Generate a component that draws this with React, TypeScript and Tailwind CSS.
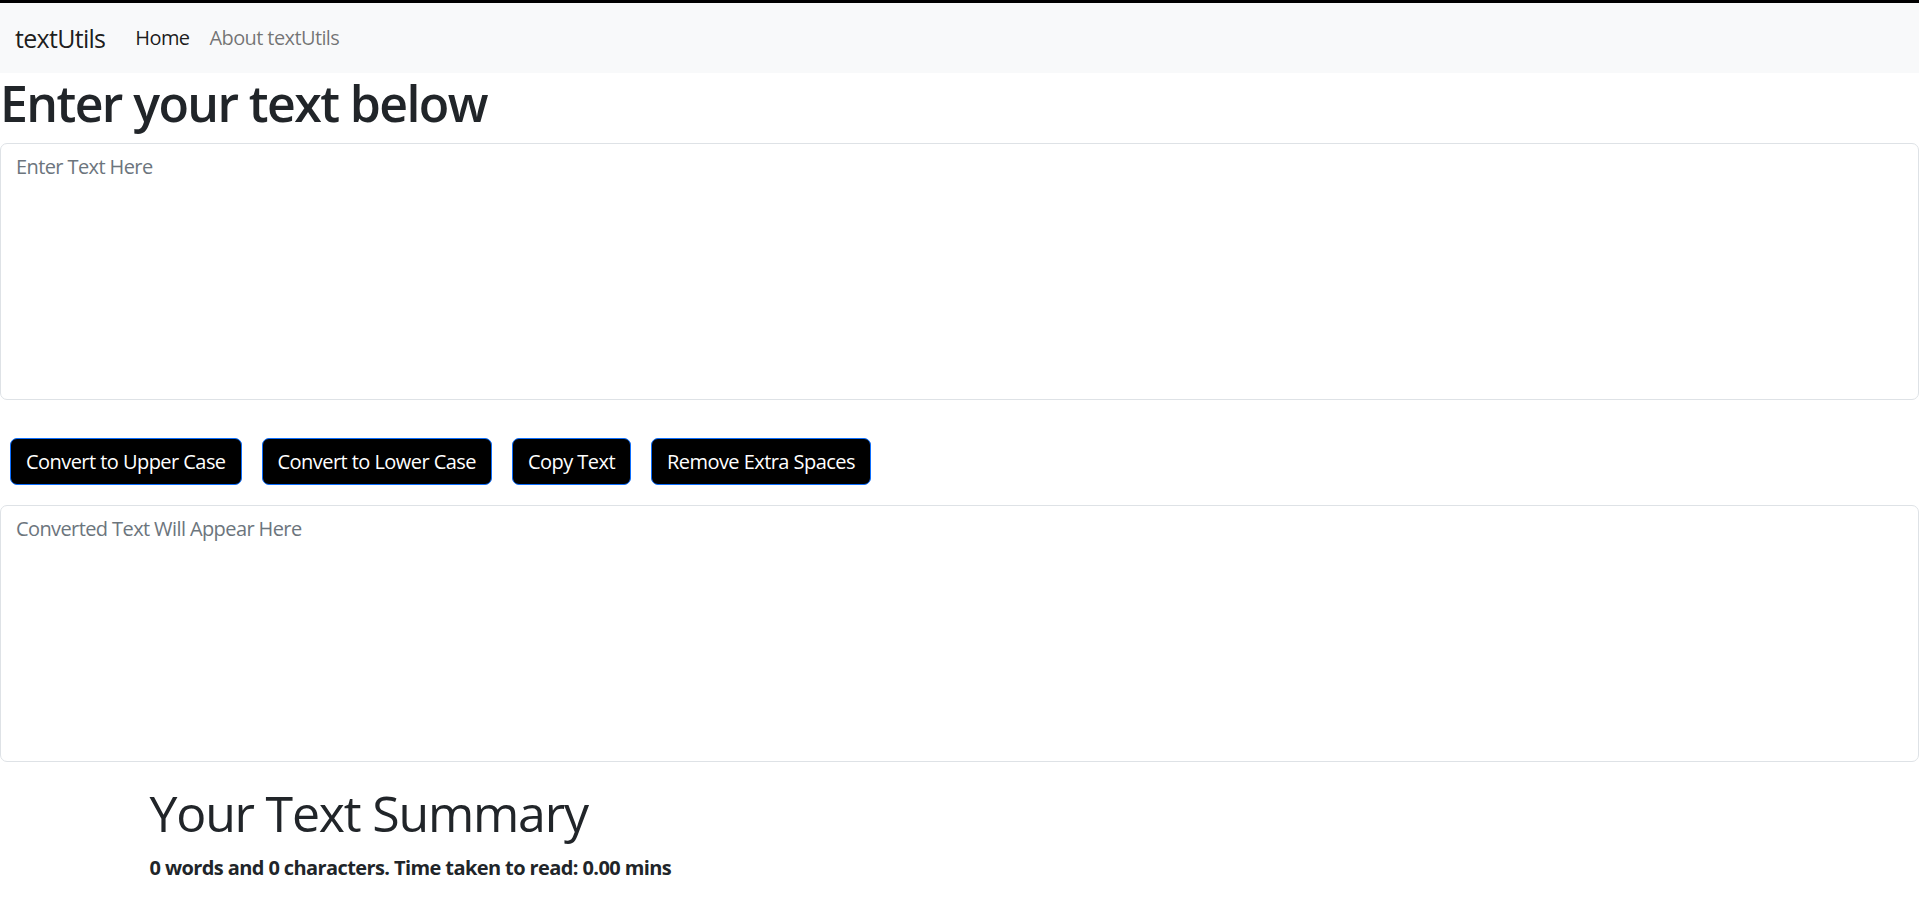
import React, { useState } from "react";

const font = { fontFamily: '"Open Sans", "Noto Sans", sans-serif' };

export default function App() {
  const [text, setText] = useState("");
  const [out, setOut] = useState("");
  const words = text.split(/\s+/).filter((w) => w.length > 0).length;
  return (
    <div className="min-h-[907px] bg-white text-[#212529]" style={font}>
      <div className="h-[3px] bg-black" />
      <nav className="flex h-[70px] items-center bg-[#f8f9fa] px-[15px]">
        <a className="mr-[20px] text-[25px] leading-[37px] text-black/90 tracking-[-0.7px]">textUtils</a>
        <a className="px-[10px] text-[20px] text-black/90 tracking-[-0.6px]">Home</a>
        <a className="px-[10px] text-[20px] text-black/55 tracking-[-0.6px]">About textUtils</a>
      </nav>
      <h1 className="mb-[10px] text-[50px] font-semibold leading-[60px] tracking-[-1.6px]">Enter your text below</h1>
      <textarea
        className="block h-[257px] w-full resize-none rounded-[7px] border border-[#dee2e6] px-[15px] py-[8px] text-[20px] leading-[30px] outline-none placeholder:text-[#6c757d] tracking-[-0.6px]"
        placeholder="Enter Text Here"
        value={text}
        onChange={(e) => setText(e.target.value)}
      />
      <div className="mt-[38px] flex gap-[20px] px-[10px]">
        {["Convert to Upper Case", "Convert to Lower Case", "Copy Text", "Remove Extra Spaces"].map((b) => (
          <button
            key={b}
            className="h-[47px] rounded-[7px] border border-[#0d6efd] bg-black px-[15px] text-[20px] text-white tracking-[-0.55px]"
            onClick={() => {
              if (b === "Convert to Upper Case") setOut(text.toUpperCase());
              else if (b === "Convert to Lower Case") setOut(text.toLowerCase());
              else if (b === "Remove Extra Spaces") setOut(text.split(/\s+/).join(" "));
            }}
          >
            {b}
          </button>
        ))}
      </div>
      <textarea
        className="mt-[20px] block h-[257px] w-full resize-none rounded-[7px] border border-[#dee2e6] px-[15px] py-[8px] text-[20px] leading-[30px] outline-none placeholder:text-[#6c757d] tracking-[-0.6px]"
        placeholder="Converted Text Will Appear Here"
        value={out}
        readOnly
      />
      <div className="mx-auto mt-[21px] w-[1650px] px-[15px]">
        <h1 className="text-[50px] font-medium leading-[60px] tracking-[-1.2px]">Your Text Summary</h1>
        <p className="mt-[10px] text-[20px] font-bold leading-[30px] tracking-[-0.6px]">
          {words} words and {text.length} characters. Time taken to read: {(words * 0.008).toFixed(2)} mins
        </p>
      </div>
    </div>
  );
}
